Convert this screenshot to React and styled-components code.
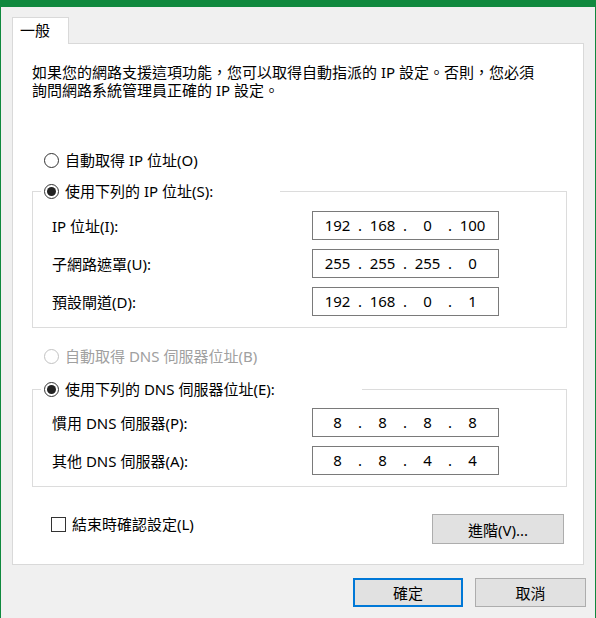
import React from "react";
import styled, { createGlobalStyle } from "styled-components";

const GlobalStyle = createGlobalStyle`
  html, body {
    margin: 0;
    padding: 0;
  }
  body {
    background: #f0f0f0;
    font-family: "Noto Sans", "Noto Sans CJK TC", sans-serif;
    font-size: 15px;
    color: #000;
  }
`;

const Window = styled.div`
  width: 596px;
  height: 618px;
  display: flex;
  flex-direction: column;
  background: #f0f0f0;
  overflow: hidden;
`;

const TitleBar = styled.div`
  height: 7px;
  flex: none;
  background: #10893e;
`;

const Body = styled.div`
  flex: 1;
  display: flex;
  flex-direction: column;
  border-left: 1px solid #10893e;
  border-right: 1px solid #10893e;
  padding: 10px 11px 0 11px;
`;

const TabStrip = styled.div`
  display: flex;
`;

const Tab = styled.div`
  position: relative;
  z-index: 1;
  width: 48px;
  height: 26px;
  margin-bottom: -1px;
  padding-left: 7px;
  line-height: 24px;
  background: #fff;
  border: 1px solid #d9d9d9;
  border-bottom: none;
`;

const Panel = styled.div`
  background: #fff;
  border: 1px solid #d9d9d9;
  padding: 19px 15px 20px 19px;
  display: flex;
  flex-direction: column;
`;

const Intro = styled.p`
  margin: 0;
  line-height: 18px;
`;

const RadioRow = styled.label`
  display: flex;
  align-items: center;
  gap: 6px;
  height: 19px;
  line-height: 19px;
  padding-left: ${(p) => p.$indent || 0}px;
  margin-top: ${(p) => p.$top || 0}px;
  color: ${(p) => (p.$disabled ? "#a0a0a0" : "#000")};
  white-space: nowrap;
`;

const RadioDot = styled.span`
  position: relative;
  width: 15px;
  height: 15px;
  flex: none;
  box-sizing: border-box;
  border-radius: 50%;
  border: 1px solid ${(p) => (p.$disabled ? "#c2c2c2" : "#333")};
  background: #fff;

  &::after {
    content: "";
    display: ${(p) => (p.$checked ? "block" : "none")};
    position: absolute;
    left: 2px;
    top: 2px;
    width: 9px;
    height: 9px;
    border-radius: 50%;
    background: #222;
  }
`;

const Group = styled.fieldset`
  margin: ${(p) => p.$top}px 0 0 0;
  padding: ${(p) => p.$padTop}px 0 11px 19px;
  width: 535px;
  box-sizing: border-box;
  min-width: 0;
  border: 1px solid #dcdcdc;
  display: flex;
  flex-direction: column;
  gap: 9px;
`;

const Legend = styled.legend`
  margin-left: -11px;
  padding: 0 0 0 3px;
  width: ${(p) => p.$width}px;
  box-sizing: border-box;
`;

const FieldRow = styled.div`
  display: flex;
  align-items: center;
  height: 29px;
`;

const FieldLabel = styled.span`
  width: 260px;
  flex: none;
  white-space: nowrap;
`;

const AddressBox = styled.div`
  display: flex;
  align-items: center;
  width: 187px;
  height: 29px;
  box-sizing: border-box;
  padding-left: 4px;
  border: 1px solid #7a7a7a;
  background: #fff;
  line-height: 27px;
`;

const Octet = styled.span`
  width: 41px;
  text-align: center;
`;

const Dot = styled.span`
  width: 4px;
  text-align: center;
`;

const BottomRow = styled.div`
  display: flex;
  align-items: flex-start;
  justify-content: space-between;
  width: 535px;
  margin-top: 27px;
  padding: 0 3px 0 19px;
  box-sizing: border-box;
`;

const CheckRow = styled.label`
  display: flex;
  align-items: center;
  gap: 6px;
  height: 19px;
  line-height: 19px;
  margin-top: 1px;
`;

const CheckBox = styled.span`
  width: 15px;
  height: 15px;
  box-sizing: border-box;
  border: 1px solid #333;
  background: #fff;
`;

const Button = styled.button`
  width: ${(p) => p.$width}px;
  height: ${(p) => p.$height || 29}px;
  box-sizing: border-box;
  margin: 0;
  padding: 0;
  font: inherit;
  color: #000;
  background: #e1e1e1;
  border: ${(p) => (p.$primary ? "2px solid #0078d7" : "1px solid #adadad")};
`;

const Footer = styled.div`
  display: flex;
  justify-content: flex-end;
  gap: 12px;
  margin: 13px -2px 0 0;
`;

function Radio({ checked, disabled, children, indent, top }) {
  return (
    <RadioRow $indent={indent} $top={top} $disabled={disabled}>
      <RadioDot $checked={checked} $disabled={disabled} />
      {children}
    </RadioRow>
  );
}

function Address({ parts }) {
  return (
    <AddressBox>
      {parts.map((p, i) => (
        <React.Fragment key={i}>
          {i > 0 && <Dot>.</Dot>}
          <Octet>{p}</Octet>
        </React.Fragment>
      ))}
    </AddressBox>
  );
}

const ipRows = [
  ["IP 位址(I):", ["192", "168", "0", "100"]],
  ["子網路遮罩(U):", ["255", "255", "255", "0"]],
  ["預設閘道(D):", ["192", "168", "0", "1"]],
];

const dnsRows = [
  ["慣用 DNS 伺服器(P):", ["8", "8", "8", "8"]],
  ["其他 DNS 伺服器(A):", ["8", "8", "4", "4"]],
];

export default function App() {
  return (
    <>
      <GlobalStyle />
      <Window>
        <TitleBar />
        <Body>
          <TabStrip>
            <Tab>一般</Tab>
          </TabStrip>
          <Panel>
            <Intro>
              如果您的網路支援這項功能，您可以取得自動指派的 IP 設定。否則，您必須
              <br />
              詢問網路系統管理員正確的 IP 設定。
            </Intro>

            <Radio indent={12} top={52}>
              自動取得 IP 位址(O)
            </Radio>

            <Group $top={12} $padTop={10}>
              <Legend $width={239}>
                <Radio checked>使用下列的 IP 位址(S):</Radio>
              </Legend>
              {ipRows.map(([label, parts]) => (
                <FieldRow key={label}>
                  <FieldLabel>{label}</FieldLabel>
                  <Address parts={parts} />
                </FieldRow>
              ))}
            </Group>

            <Radio indent={12} top={19} disabled>
              自動取得 DNS 伺服器位址(B)
            </Radio>

            <Group $top={14} $padTop={9}>
              <Legend $width={321}>
                <Radio checked>使用下列的 DNS 伺服器位址(E):</Radio>
              </Legend>
              {dnsRows.map(([label, parts]) => (
                <FieldRow key={label}>
                  <FieldLabel>{label}</FieldLabel>
                  <Address parts={parts} />
                </FieldRow>
              ))}
            </Group>

            <BottomRow>
              <CheckRow>
                <CheckBox />
                結束時確認設定(L)
              </CheckRow>
              <Button $width={132} $height={30}>
                進階(V)...
              </Button>
            </BottomRow>
          </Panel>
          <Footer>
            <Button $width={110} $primary>
              確定
            </Button>
            <Button $width={111}>取消</Button>
          </Footer>
        </Body>
      </Window>
    </>
  );
}
